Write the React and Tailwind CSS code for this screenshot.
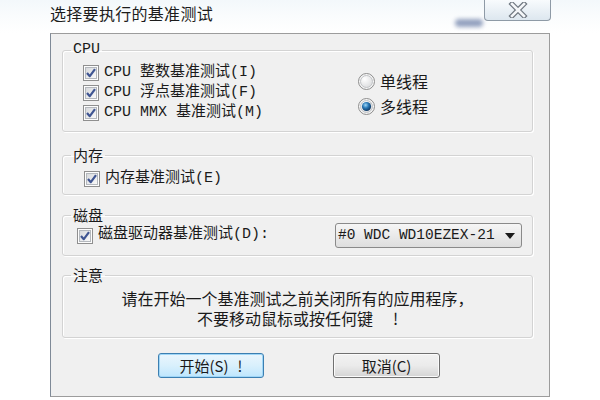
import React from 'react';

const mono = { fontFamily: '"Liberation Mono", "Noto Sans CJK SC", monospace' };

const CheckBox = () => (
  <svg width="16" height="16" viewBox="0 0 16 16" className="shrink-0">
    <defs>
      <linearGradient id="cbFill" x1="0" y1="0" x2="1" y2="1">
        <stop offset="0" stopColor="#d6d8db" />
        <stop offset="1" stopColor="#fbfbfb" />
      </linearGradient>
    </defs>
    <rect x="0.5" y="0.5" width="15" height="15" fill="#fdfdfd" stroke="#8f8f8f" />
    <rect x="2.5" y="2.5" width="11" height="11" fill="url(#cbFill)" stroke="#b4b8bd" />
    <path d="M4 8 L6.8 11.2 L12 4.2" stroke="#3f5592" strokeWidth="2.2" fill="none" strokeLinejoin="round" />
  </svg>
);

const Radio = ({ on }) => (
  <svg width="17" height="17" viewBox="0 0 17 17" className="shrink-0">
    <defs>
      <radialGradient id="rdBack" cx="0.35" cy="0.3" r="0.8">
        <stop offset="0" stopColor="#ffffff" />
        <stop offset="1" stopColor="#d9dadc" />
      </radialGradient>
      <radialGradient id="rdDot" cx="0.4" cy="0.35" r="0.7">
        <stop offset="0" stopColor="#9fd6f5" />
        <stop offset="0.45" stopColor="#2a7ab8" />
        <stop offset="1" stopColor="#0b2d55" />
      </radialGradient>
    </defs>
    <circle cx="8.5" cy="8.5" r="8" fill="#f6f6f6" stroke="#8c8c8c" />
    <circle cx="8.5" cy="8.5" r="6" fill="url(#rdBack)" stroke="#c2c4c7" />
    {on && <circle cx="8.5" cy="8.5" r="4.6" fill="url(#rdDot)" />}
  </svg>
);

const CheckRow = ({ text }) => (
  <div className="h-[20px] flex items-center gap-[5px] text-[15px] text-[#1a1a1a]" style={mono}>
    <CheckBox />
    <span className="whitespace-pre">{text}</span>
  </div>
);

const Group = ({ label, labelMono, className, children }) => (
  <fieldset className={`border border-[#d3d3d3] rounded-[3px] shadow-[inset_1px_1px_0_#ffffff,1px_1px_0_#ffffff] ${className}`}>
    <legend
      className="ml-[8px] px-[2px] leading-[16px] text-[15px] text-[#1a1a1a]"
      style={labelMono ? mono : { fontFamily: '"Noto Sans CJK SC", sans-serif' }}
    >
      {label}
    </legend>
    {children}
  </fieldset>
);

export default function App() {
  return (
    <div className="w-[600px] h-[400px] bg-white overflow-hidden flex flex-col" style={{ fontFamily: '"Noto Sans CJK SC", sans-serif' }}>
      {/* title bar */}
      <div className="relative h-[33px] flex items-start pl-[50px] pr-[49px] bg-gradient-to-b from-[#f3f8fb] via-[#fafcfd] to-white">
        <span className="mt-[2px] text-[16px] leading-[22px] text-[#1c1c1c] tracking-[0.3px]">选择要执行的基准测试</span>
        <div className="flex-1" />
        <div className="absolute left-[455px] top-[19px] w-[28px] h-[8px] rounded-full bg-[#4f6596] opacity-60 blur-[2px]" />
        <div className="w-[67px] h-[21px] rounded-b-[4px] border border-t-0 border-[#8e9aa6] bg-gradient-to-b from-[#f8fbfd] to-[#dde7ef] flex items-center justify-center">
          <svg width="20" height="16" viewBox="0 0 20 16">
            <path d="M4 2 L16 14 M16 2 L4 14" stroke="#6f7780" strokeWidth="5" strokeLinecap="square" fill="none" />
            <path d="M4 2 L16 14 M16 2 L4 14" stroke="#f4f6f8" strokeWidth="2.6" strokeLinecap="square" fill="none" />
          </svg>
        </div>
      </div>

      {/* client area */}
      <div className="mx-[50px] w-[500px] h-[364px] border border-[#9c9c9c] border-l-[#7f8a97] bg-[#f0f0f0] pt-[8px] pl-[11px] pr-[16px] flex flex-col">
        <Group label="CPU" labelMono className="h-[90px]">
          <div className="flex pt-[5px]">
            <div className="w-[295px] pl-[20px] flex flex-col">
              <CheckRow text="CPU 整数基准测试(I)" />
              <CheckRow text="CPU 浮点基准测试(F)" />
              <CheckRow text="CPU MMX 基准测试(M)" />
            </div>
            <div className="flex flex-col gap-[8px] pt-[10px] text-[16px] leading-[17px] text-[#1a1a1a]">
              <div className="flex items-center gap-[5px]"><Radio /><span>单线程</span></div>
              <div className="flex items-center gap-[5px]"><Radio on /><span>多线程</span></div>
            </div>
          </div>
        </Group>

        <Group label="内存" className="h-[48px] mt-[15px]">
          <div className="pt-[6px] pl-[21px]">
            <CheckRow text="内存基准测试(E)" />
          </div>
        </Group>

        <Group label="磁盘" className="h-[49px] mt-[12px]">
          <div className="flex items-center pl-[14px] pr-[10px]">
            <CheckRow text="磁盘驱动器基准测试(D): " />
            <div className="ml-auto w-[187px] h-[25px] rounded-[3px] border border-[#8a8a8a] bg-gradient-to-b from-[#f6f6f6] to-[#dedede] flex items-center pl-[2px] pr-[6px] text-[14.5px] text-[#1a1a1a]" style={mono}>
              <span className="whitespace-pre">#0 WDC WD10EZEX-21</span>
              <div className="flex-1" />
              <svg width="10" height="6" viewBox="0 0 10 6"><path d="M0 0 H10 L5 6 Z" fill="#1a1a1a" /></svg>
            </div>
          </div>
        </Group>

        <Group label="注意" className="h-[71px] mt-[11px]">
          <div className="pt-[5px] text-center text-[16px] leading-[20px] text-[#1a1a1a]">
            <div>请在开始一个基准测试之前关闭所有的应用程序，</div>
            <div>不要移动鼠标或按任何键<span className="ml-[20px]">!</span></div>
          </div>
        </Group>

        <div className="mt-[15px] flex justify-center gap-[69px] pl-[3px]">
          <button className="w-[106px] h-[25px] rounded-[3px] border border-[#3c7fb1] bg-gradient-to-b from-[#eaf6fd] via-[#d9f0fc] to-[#bee6fd] shadow-[inset_0_0_0_1px_#9fd6f7] text-[15px] text-[#1a1a1a] leading-none">
            开始(S)<span className="ml-[9px]">!</span>
          </button>
          <button className="w-[107px] h-[25px] rounded-[3px] border border-[#707070] bg-gradient-to-b from-[#f2f2f2] via-[#ebebeb] to-[#d4d4d4] shadow-[inset_0_0_0_1px_#fbfbfb] text-[15px] text-[#1a1a1a] leading-none">
            取消(C)
          </button>
        </div>
      </div>
    </div>
  );
}
